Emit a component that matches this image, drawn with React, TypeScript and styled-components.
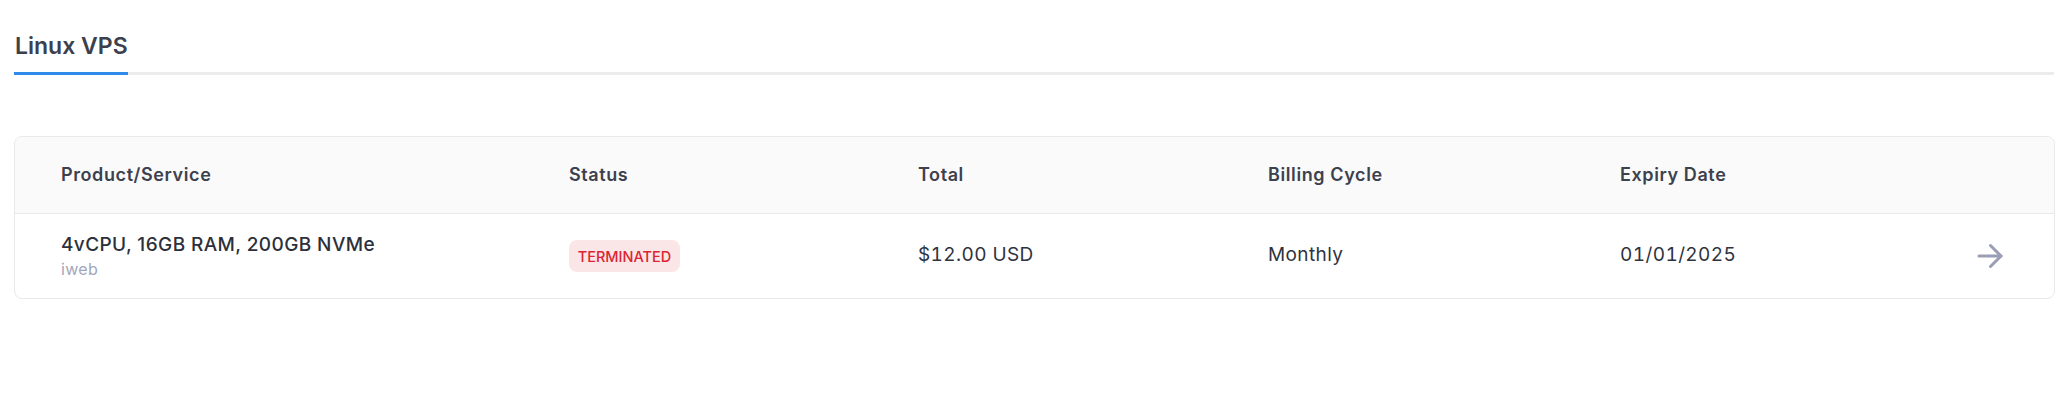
import React from "react";
import styled, { createGlobalStyle } from "styled-components";

const GlobalStyle = createGlobalStyle`
  html, body { margin: 0; padding: 0; background: #ffffff; }
  body { font-family: Inter, "Noto Sans", sans-serif; -webkit-font-smoothing: antialiased; }
`;

const Page = styled.div`
  width: 2040px;
  margin-left: 14px;
  padding-top: 32px;
`;

const Tabs = styled.div`
  display: flex;
  border-bottom: 3px solid #ececec;
`;

const Tab = styled.div<{ $active?: boolean }>`
  font-size: 23px;
  font-weight: 600;
  color: #3c404d;
  line-height: 28px;
  padding: 0 0 12px 1px;
  margin-bottom: -3px;
  border-bottom: 3px solid ${(p) => (p.$active ? "#2f8ae9" : "transparent")};
`;

const Card = styled.div`
  margin-top: 61px;
  width: 2039px;
  border: 1px solid #e8e8ed;
  border-radius: 8px;
  overflow: hidden;
`;

const cols = "508px 349px 350px 352px 1fr auto";

const HeadRow = styled.div`
  display: grid;
  grid-template-columns: ${cols};
  align-items: center;
  height: 77px;
  padding-left: 46px;
  padding-bottom: 2px;
  box-sizing: border-box;
  background: #fafafa;
  border-bottom: 1px solid #e8e8ed;
`;

const HeadCell = styled.div`
  font-size: 18px;
  font-weight: 600;
  letter-spacing: 0.6px;
  color: #3d414e;
`;

const BodyRow = styled.div`
  display: grid;
  grid-template-columns: ${cols};
  align-items: center;
  height: 84px;
  padding-left: 46px;
  padding-right: 51px;
`;

const Cell = styled.div`
  font-size: 19px;
  font-weight: 400;
  letter-spacing: 0.4px;
  font-variant-numeric: tabular-nums;
  color: #2f333f;
  margin-bottom: 3px;
`;

const ProductName = styled.div`
  font-size: 19px;
  font-weight: 500;
  letter-spacing: 0.4px;
  color: #2c303b;
  line-height: 24px;
`;

const ProductSub = styled.div`
  font-size: 16px;
  color: #a3a6ba;
  letter-spacing: 0.3px;
  line-height: 20px;
  margin-top: 2px;
`;

const Badge = styled.span`
  display: inline-flex;
  align-items: center;
  justify-content: center;
  height: 32px;
  width: 111px;
  border-radius: 8px;
  background: #fbe6e7;
  color: #dc2433;
  font-size: 14.5px;
  font-weight: 500;
`;

const ArrowCell = styled.div`
  display: flex;
  justify-content: flex-end;
  align-items: center;
`;

const Arrow = () => (
  <svg width="26" height="26" viewBox="0 0 26 26" fill="none" stroke="#9a9eb4" strokeWidth="3" strokeLinecap="round" strokeLinejoin="round">
    <path d="M2 13h22" />
    <path d="M13.5 2.5L24 13 13.5 23.5" />
  </svg>
);

export default function App() {
  return (
    <>
      <GlobalStyle />
      <Page>
        <Tabs>
          <Tab $active>Linux VPS</Tab>
        </Tabs>
        <Card>
          <HeadRow>
            <HeadCell>Product/Service</HeadCell>
            <HeadCell>Status</HeadCell>
            <HeadCell>Total</HeadCell>
            <HeadCell>Billing Cycle</HeadCell>
            <HeadCell>Expiry Date</HeadCell>
          </HeadRow>
          <BodyRow>
            <div>
              <ProductName>4vCPU, 16GB RAM, 200GB NVMe</ProductName>
              <ProductSub>iweb</ProductSub>
            </div>
            <div>
              <Badge>TERMINATED</Badge>
            </div>
            <Cell>$12.00 USD</Cell>
            <Cell>Monthly</Cell>
            <Cell>01/01/2025</Cell>
            <ArrowCell>
              <Arrow />
            </ArrowCell>
          </BodyRow>
        </Card>
      </Page>
    </>
  );
}
